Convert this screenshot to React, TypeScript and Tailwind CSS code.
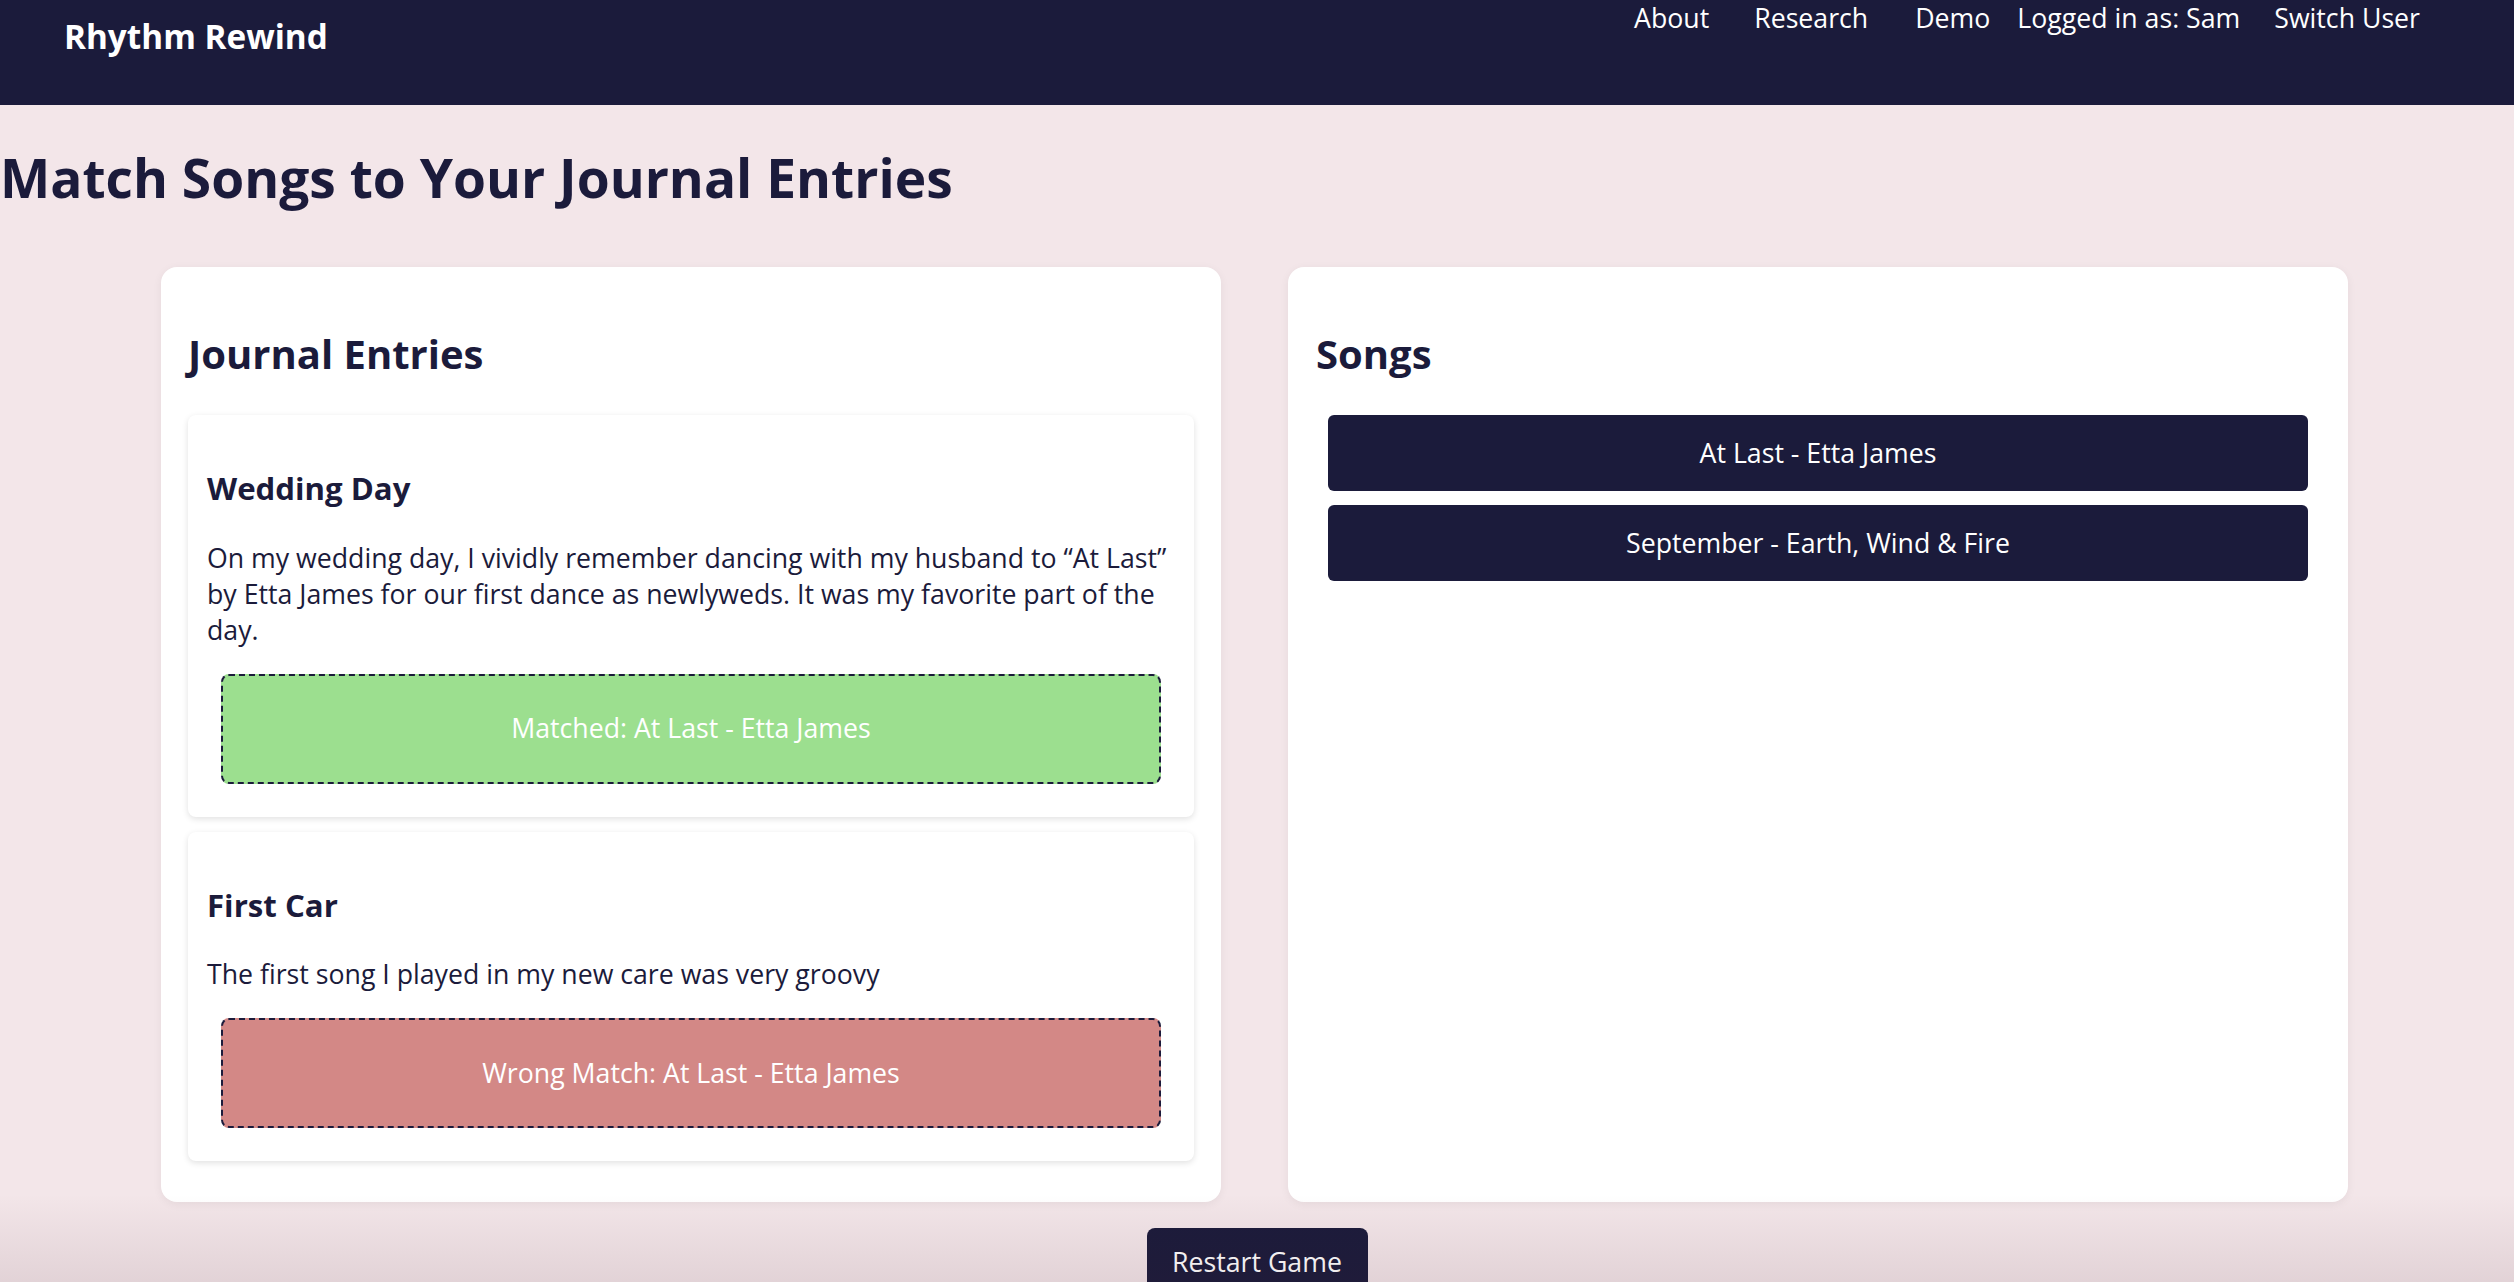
import React from "react";

const navy = "text-[#1b1b3b]";

function Entry({ title, text, result, ok }: { title: string; text: string; result: string; ok: boolean }) {
  return (
    <div className="rounded-lg bg-white px-[19px] pt-[52px] pb-[33px] shadow-[0_2px_6px_rgba(0,0,0,0.12)]">
      <h3 className={`text-[31.2px] leading-[1.362] font-bold ${navy}`}>{title}</h3>
      <p className={`mt-[30px] text-[26.7px] leading-[36px] ${navy}`}>{text}</p>
      <div
        className={`mx-[14px] mt-[26px] flex h-[110px] items-center justify-center rounded-lg border-2 border-dashed border-[#1b1b3b] text-[26.7px] leading-[1.362] text-white ${
          ok ? "bg-[#9cdf8f]" : "bg-[#d38886]"
        }`}
      >
        {result}
      </div>
    </div>
  );
}

export default function App() {
  return (
    <div className="relative min-h-screen overflow-hidden bg-[#f3e6e9]" style={{ fontFamily: '"Open Sans", "Liberation Sans", sans-serif' }}>
      <nav className="flex h-[105px] items-start bg-[#1b1b3b] text-white">
        <div className="ml-[64px] mt-[14px] text-[33.3px] leading-[1.362] font-bold">Rhythm Rewind</div>
        <div className="ml-auto mr-[94px] mt-[5px] flex text-[26.7px] leading-none">
          <a className="mr-[45px]">About</a>
          <a className="mr-[47px]">Research</a>
          <a className="mr-[27px]">Demo</a>
          <span className="mr-[34px]">Logged in as: Sam</span>
          <a>Switch User</a>
        </div>
      </nav>

      <h1 className={`mt-[37px] text-[53.3px] leading-[1.362] font-bold ${navy}`}>Match Songs to Your Journal Entries</h1>

      <div className="ml-[161px] mt-[52px] grid w-[2187px] grid-cols-2 gap-[67px]">
        <section className="rounded-2xl bg-white px-[27px] pt-[60px] pb-[41px] shadow-[0_2px_10px_rgba(0,0,0,0.06)]">
          <h2 className={`text-[40px] leading-[1.362] font-bold ${navy}`}>Journal Entries</h2>
          <div className="mt-[34px] flex flex-col gap-[15px]">
            <Entry
              title="Wedding Day"
              text="On my wedding day, I vividly remember dancing with my husband to “At Last” by Etta James for our first dance as newlyweds. It was my favorite part of the day."
              result="Matched: At Last - Etta James"
              ok
            />
            <Entry
              title="First Car"
              text="The first song I played in my new care was very groovy"
              result="Wrong Match: At Last - Etta James"
              ok={false}
            />
          </div>
        </section>

        <section className="rounded-2xl bg-white px-[28px] pt-[60px] shadow-[0_2px_10px_rgba(0,0,0,0.06)]">
          <h2 className={`text-[40px] leading-[1.362] font-bold ${navy}`}>Songs</h2>
          <div className="mx-[12px] mt-[34px] flex flex-col gap-[14px]">
            <button className="h-[76px] rounded-md bg-[#1b1b3b] text-[26.7px] leading-[1.362] text-white">At Last - Etta James</button>
            <button className="h-[76px] rounded-md bg-[#1b1b3b] text-[26.7px] leading-[1.362] text-white">September - Earth, Wind &amp; Fire</button>
          </div>
        </section>
      </div>

      <div className="mt-[26px] flex justify-center">
        <button className="flex h-[76px] w-[221px] items-start justify-center rounded-lg bg-[#1b1b3b] pt-[16px] text-[26.7px] leading-[1.362] text-white">
          Restart Game
        </button>
      </div>

      <div className="pointer-events-none absolute inset-x-0 bottom-0 h-[110px] bg-gradient-to-b from-transparent to-[rgba(70,30,45,0.12)]" />
    </div>
  );
}
